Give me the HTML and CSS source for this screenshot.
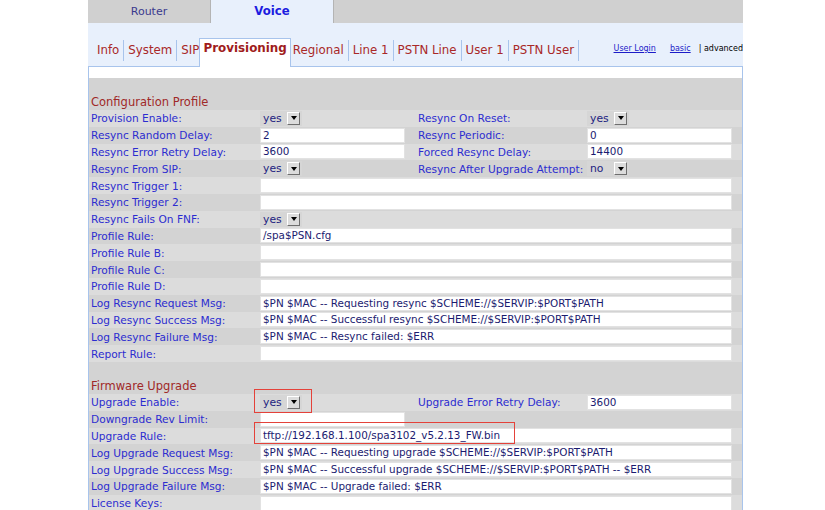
FILE: index.html
```html
<!DOCTYPE html>
<html>
<head>
<meta charset="utf-8">
<title>Provisioning</title>
<link rel="stylesheet" href="styles.css">
</head>
<body>
<div class="page">
  <div class="toptabs">
    <div class="ttab">Router</div>
    <div class="ttab on">Voice</div>
    <div class="ttab-rest"></div>
  </div>
  <div class="subbar">
    <a class="stab">Info</a>
    <a class="stab">System</a>
    <a class="stab nosep">SIP</a>
    <a class="stab active">Provisioning</a>
    <a class="stab">Regional</a>
    <a class="stab">Line 1</a>
    <a class="stab">PSTN Line</a>
    <a class="stab">User 1</a>
    <a class="stab">PSTN User</a>
    <div class="links"><a class="lnk">User Login</a><a class="lnk">basic</a><span class="cur">| advanced</span></div>
  </div>
  <div class="panel">
    <div class="strip"></div>
    <table class="form">
      <colgroup>
        <col class="c1"><col class="c2"><col class="c3"><col class="c4"><col class="c5">
      </colgroup>
      <tr class="sp"><td colspan="5"></td></tr>
      <tr class="hd"><td colspan="5">Configuration Profile</td></tr>
      <tr class="l">
        <td class="lb">Provision Enable:</td>
        <td class="v1"><div class="sel"><span class="st">yes</span><span class="btn"><i></i></span></div></td>
        <td class="lb2">Resync On Reset:</td>
        <td class="v2"><div class="sel"><span class="st">yes</span><span class="btn"><i></i></span></div></td>
        <td></td>
      </tr>
      <tr class="d">
        <td class="lb">Resync Random Delay:</td>
        <td class="v1"><div class="fld">2</div></td>
        <td class="lb2">Resync Periodic:</td>
        <td class="v2"><div class="fld">0</div></td>
        <td></td>
      </tr>
      <tr class="l">
        <td class="lb">Resync Error Retry Delay:</td>
        <td class="v1"><div class="fld">3600</div></td>
        <td class="lb2">Forced Resync Delay:</td>
        <td class="v2"><div class="fld">14400</div></td>
        <td></td>
      </tr>
      <tr class="d">
        <td class="lb">Resync From SIP:</td>
        <td class="v1"><div class="sel"><span class="st">yes</span><span class="btn"><i></i></span></div></td>
        <td class="lb2">Resync After Upgrade Attempt:</td>
        <td class="v2"><div class="sel"><span class="st">no</span><span class="btn"><i></i></span></div></td>
        <td></td>
      </tr>
      <tr class="l">
        <td class="lb">Resync Trigger 1:</td>
        <td class="v1" colspan="3"><div class="fld wide"></div></td>
        <td></td>
      </tr>
      <tr class="d">
        <td class="lb">Resync Trigger 2:</td>
        <td class="v1" colspan="3"><div class="fld wide"></div></td>
        <td></td>
      </tr>
      <tr class="l">
        <td class="lb">Resync Fails On FNF:</td>
        <td class="v1"><div class="sel"><span class="st">yes</span><span class="btn"><i></i></span></div></td>
        <td></td><td></td><td></td>
      </tr>
      <tr class="d">
        <td class="lb">Profile Rule:</td>
        <td class="v1" colspan="3"><div class="fld wide">/spa$PSN.cfg</div></td>
        <td></td>
      </tr>
      <tr class="l">
        <td class="lb">Profile Rule B:</td>
        <td class="v1" colspan="3"><div class="fld wide"></div></td>
        <td></td>
      </tr>
      <tr class="d">
        <td class="lb">Profile Rule C:</td>
        <td class="v1" colspan="3"><div class="fld wide"></div></td>
        <td></td>
      </tr>
      <tr class="l">
        <td class="lb">Profile Rule D:</td>
        <td class="v1" colspan="3"><div class="fld wide"></div></td>
        <td></td>
      </tr>
      <tr class="d">
        <td class="lb">Log Resync Request Msg:</td>
        <td class="v1" colspan="3"><div class="fld wide">$PN $MAC -- Requesting resync $SCHEME://$SERVIP:$PORT$PATH</div></td>
        <td></td>
      </tr>
      <tr class="l">
        <td class="lb">Log Resync Success Msg:</td>
        <td class="v1" colspan="3"><div class="fld wide">$PN $MAC -- Successful resync $SCHEME://$SERVIP:$PORT$PATH</div></td>
        <td></td>
      </tr>
      <tr class="d">
        <td class="lb">Log Resync Failure Msg:</td>
        <td class="v1" colspan="3"><div class="fld wide">$PN $MAC -- Resync failed: $ERR</div></td>
        <td></td>
      </tr>
      <tr class="l">
        <td class="lb">Report Rule:</td>
        <td class="v1" colspan="3"><div class="fld wide"></div></td>
        <td></td>
      </tr>
      <tr class="sp"><td colspan="5"></td></tr>
      <tr class="hd"><td colspan="5">Firmware Upgrade</td></tr>
      <tr class="l">
        <td class="lb">Upgrade Enable:</td>
        <td class="v1 mk"><div class="sel"><span class="st">yes</span><span class="btn"><i></i></span></div><span class="mark m1"></span></td>
        <td class="lb2">Upgrade Error Retry Delay:</td>
        <td class="v2"><div class="fld">3600</div></td>
        <td></td>
      </tr>
      <tr class="d">
        <td class="lb">Downgrade Rev Limit:</td>
        <td class="v1"><div class="fld"></div></td>
        <td></td><td></td><td></td>
      </tr>
      <tr class="l">
        <td class="lb">Upgrade Rule:</td>
        <td class="v1 mk" colspan="3"><div class="fld wide">tftp://192.168.1.100/spa3102_v5.2.13_FW.bin</div><span class="mark m2"></span></td>
        <td></td>
      </tr>
      <tr class="d">
        <td class="lb">Log Upgrade Request Msg:</td>
        <td class="v1" colspan="3"><div class="fld wide">$PN $MAC -- Requesting upgrade $SCHEME://$SERVIP:$PORT$PATH</div></td>
        <td></td>
      </tr>
      <tr class="l">
        <td class="lb">Log Upgrade Success Msg:</td>
        <td class="v1" colspan="3"><div class="fld wide">$PN $MAC -- Successful upgrade $SCHEME://$SERVIP:$PORT$PATH -- $ERR</div></td>
        <td></td>
      </tr>
      <tr class="d">
        <td class="lb">Log Upgrade Failure Msg:</td>
        <td class="v1" colspan="3"><div class="fld wide">$PN $MAC -- Upgrade failed: $ERR</div></td>
        <td></td>
      </tr>
      <tr class="l">
        <td class="lb">License Keys:</td>
        <td class="v1" colspan="3"><div class="fld wide"></div></td>
        <td></td>
      </tr>
    </table>
  </div>
</div>
</body>
</html>
```
FILE: styles.css
```css
html, body {
  margin: 0;
  padding: 0;
  background: #ffffff;
  font-family: "DejaVu Sans", "Noto Sans", sans-serif;
}

.page {
  margin-left: 88px;
  width: 655px;
  overflow: hidden;
}

/* top tabs */
.toptabs {
  display: flex;
  height: 23px;
  background: #d0d0d0;
}
.ttab {
  width: 122px;
  border-right: 1px solid #b4b4b4;
  text-align: center;
  line-height: 23px;
  font-size: 11px;
  color: #3a3a8e;
}
.ttab.on {
  background: #e8f0fc;
  color: #1c1ce0;
  font-weight: bold;
  font-size: 11.7px;
}
.ttab-rest {
  flex: 1;
}

/* sub tabs */
.subbar {
  display: flex;
  align-items: flex-end;
  height: 43px;
  padding-left: 5px;
  background: #e8f0fc;
}
.stab {
  padding: 0 4px;
  border-right: 1px solid #a8c4ec;
  line-height: 21px;
  height: 21px;
  margin-bottom: 5px;
  color: #a82828;
  font-size: 11.8px;
  white-space: nowrap;
}
.stab.nosep {
  border-right: none;
  padding-right: 0;
}
.stab.active {
  box-sizing: border-box;
  height: 29px;
  line-height: 18px;
  padding: 0 3px;
  border: 1px solid #a8c4ec;
  border-bottom: none;
  background: #ffffff;
  font-weight: bold;
  font-size: 11.9px;
  color: #a01c1c;
  margin-bottom: -1px;
}
.stab.active + .stab {
  padding-left: 2px;
}
.links {
  margin-left: auto;
  margin-bottom: 11px;
  display: flex;
  font-size: 8px;
  line-height: 12px;
  white-space: nowrap;
}
.lnk {
  color: #1c1cc8;
  text-decoration: underline;
  margin-right: 14px;
}
.lnk + .lnk {
  margin-right: 8px;
}
.cur {
  color: #000000;
}

/* panel */
.panel {
  border-left: 1px solid #a8c4ec;
  border-right: 1px solid #a8c4ec;
  background: #d3d3d3;
}
.strip {
  height: 11px;
  border-top: 1px solid #a8c4ec;
  background: #ffffff;
}

.form {
  border-collapse: collapse;
  table-layout: fixed;
  width: 653px;
  border-spacing: 0;
}
.c1 { width: 170px; }
.c2 { width: 147px; }
.c3 { width: 179px; }
.c4 { width: 148px; }
.c5 { width: 9px; }

.form td {
  padding: 0;
  vertical-align: middle;
  white-space: nowrap;
}
.form tr.l { background: #dcdcdc; }
.form tr.d { background: #d3d3d3; }
.form tr.l td, .form tr.d td { height: 16.8px; }
.form tr.sp td { height: 16px; }
.form tr.hd td {
  height: 16px;
  padding-left: 2px;
  font-size: 11.5px;
  line-height: 14px;
  color: #a02828;
}

.lb, .lb2 {
  font-size: 10.6px;
  line-height: 14px;
  color: #2c2cd0;
  overflow: hidden;
}
.lb { padding-left: 2px !important; }
.lb2 { padding-left: 12px !important; }

.fld {
  box-sizing: border-box;
  width: 145px;
  height: 15px;
  margin-left: 1px;
  padding-left: 2px;
  background: #ffffff;
  border: 1px solid #e2e2e2;
  font-size: 10.4px;
  line-height: 13px;
  color: #1b1b70;
  overflow: hidden;
  white-space: nowrap;
}
.v2 .fld, .v2 .sel { margin-left: 2px; }
.fld.wide { width: 472px; }

.sel {
  box-sizing: border-box;
  display: flex;
  align-items: center;
  width: 42px;
  height: 15px;
  margin-left: 1px;
  background: #d6d6d6;
}
.st {
  padding-left: 3px;
  font-size: 10.8px;
  line-height: 13px;
  color: #222280;
}
.btn {
  box-sizing: border-box;
  margin-left: auto;
  margin-right: 2px;
  width: 13px;
  height: 13px;
  background: #dcdcdc;
  border: 1px solid;
  border-color: #ffffff #6e6e6e #6e6e6e #ffffff;
  display: flex;
  align-items: center;
  justify-content: center;
}
.btn i {
  display: block;
  width: 0;
  height: 0;
  border-left: 3px solid transparent;
  border-right: 3px solid transparent;
  border-top: 4px solid #000000;
}

.mk { position: relative; }
.mark {
  position: absolute;
  box-sizing: border-box;
  border: 1px solid #e4423a;
}
.m1 { left: -5px; top: -5px; width: 58px; height: 24px; }
.m2 { left: -5px; top: -6px; width: 261px; height: 22px; }
```
